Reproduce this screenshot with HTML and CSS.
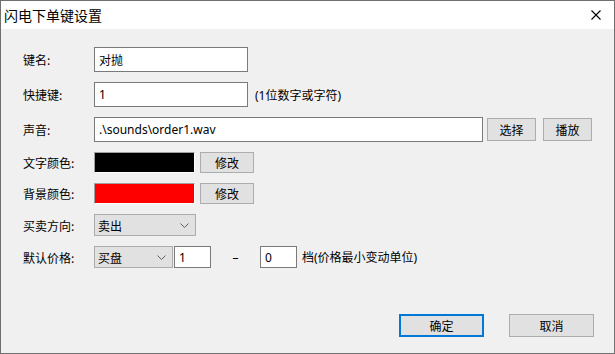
FILE: index.html
```html
<!DOCTYPE html>
<html lang="zh-CN">
<head>
  <meta charset="UTF-8">
  <title>闪电下单键设置</title>
  <link rel="stylesheet" href="styles.css">
</head>
<body>
  <div class="window">
    <div class="titlebar">
      <span class="title">闪电下单键设置</span>
      <svg class="close" width="10" height="10" viewBox="0 0 10 10">
        <path d="M0.5 0.5 L9.5 9.5 M9.5 0.5 L0.5 9.5" stroke="#000" stroke-width="1.1" fill="none"/>
      </svg>
    </div>
    <div class="content">
      <div class="row row-tall">
        <label class="label">键名:</label>
        <div class="field field-short">对抛</div>
      </div>
      <div class="row row-tall">
        <label class="label">快捷键:</label>
        <div class="field field-short">1</div>
        <span class="hint">(1位数字或字符)</span>
      </div>
      <div class="row row-tall">
        <label class="label">声音:</label>
        <div class="field field-long">.\sounds\order1.wav</div>
        <button class="btn btn-select">选择</button>
        <button class="btn btn-play">播放</button>
      </div>
      <div class="row row-color">
        <label class="label">文字颜色:</label>
        <div class="swatch swatch-black"></div>
        <button class="btn btn-edit">修改</button>
      </div>
      <div class="row row-color">
        <label class="label">背景颜色:</label>
        <div class="swatch swatch-red"></div>
        <button class="btn btn-edit">修改</button>
      </div>
      <div class="row">
        <label class="label">买卖方向:</label>
        <div class="combo combo-side">
          <span>卖出</span>
          <svg class="chevron" width="9" height="5" viewBox="0 0 9 5"><path d="M0.5 0.5 L4.5 4.5 L8.5 0.5" stroke="#606060" fill="none"/></svg>
        </div>
      </div>
      <div class="row">
        <label class="label">默认价格:</label>
        <div class="combo combo-price">
          <span>买盘</span>
          <svg class="chevron" width="9" height="5" viewBox="0 0 9 5"><path d="M0.5 0.5 L4.5 4.5 L8.5 0.5" stroke="#606060" fill="none"/></svg>
        </div>
        <div class="field field-num">1</div>
        <span class="dash">–</span>
        <div class="field field-num">0</div>
        <span class="unit">档(价格最小变动单位)</span>
      </div>
    </div>
    <div class="footer">
      <button class="btn btn-footer btn-default">确定</button>
      <button class="btn btn-footer">取消</button>
    </div>
  </div>
</body>
</html>
```

FILE: styles.css
```css
body {
  margin: 0;
  font-family: "Noto Sans", "Noto Sans CJK SC", sans-serif;
  font-size: 12px;
  color: #000;
}
.window {
  width: 613px;
  height: 352px;
  border: 1px solid #707070;
  background: #f0f0f0;
  display: flex;
  flex-direction: column;
}
.titlebar {
  height: 28px;
  background: #fff;
  display: flex;
  align-items: center;
  justify-content: space-between;
  padding: 0 13px 0 3px;
}
.title {
  font-size: 14px;
  font-family: "Noto Sans CJK SC", sans-serif;
}
.content {
  padding: 18px 0 0 22px;
  display: flex;
  flex-direction: column;
  gap: 10px;
}
.row {
  display: flex;
  align-items: center;
  height: 22px;
}
.row-tall {
  height: 25px;
}
.row-color {
  height: 21px;
}
.label {
  width: 71px;
  font-family: "Noto Sans CJK SC", sans-serif;
}
.field {
  box-sizing: border-box;
  height: 100%;
  background: #fff;
  border: 1px solid #7a7a7a;
  padding-left: 4px;
  display: flex;
  align-items: center;
  white-space: nowrap;
}
.field-short {
  width: 154px;
}
.field-long {
  width: 389px;
}
.field-num {
  width: 37px;
}
.hint {
  margin-left: 7px;
}
.btn {
  box-sizing: border-box;
  height: 23px;
  background: #e1e1e1;
  border: 1px solid #adadad;
  font-family: "Noto Sans CJK SC", sans-serif;
  font-size: 12px;
  padding: 0;
  color: #000;
}
.btn-select {
  width: 49px;
  margin-left: 4px;
}
.btn-play {
  width: 49px;
  margin-left: 7px;
}
.btn-edit {
  width: 54px;
  height: 21px;
  margin-left: 5px;
}
.swatch {
  box-sizing: border-box;
  width: 101px;
  height: 21px;
  border-top: 1px solid #a0a0a0;
  border-left: 1px solid #a0a0a0;
  border-bottom: 1px solid #fff;
  border-right: 1px solid #fff;
}
.swatch-black {
  background: #000;
}
.swatch-red {
  background: #ff0000;
}
.combo {
  box-sizing: border-box;
  height: 22px;
  background: #e1e1e1;
  border: 1px solid #adadad;
  display: flex;
  align-items: center;
  justify-content: space-between;
  padding: 0 6px 0 3px;
  font-family: "Noto Sans CJK SC", sans-serif;
}
.combo-side {
  width: 102px;
}
.combo-price {
  width: 79px;
  margin-right: 1px;
}
.dash {
  width: 49px;
  text-align: center;
}
.unit {
  margin-left: 5px;
}
.footer {
  margin-top: auto;
  margin-bottom: 16px;
  display: flex;
  justify-content: flex-end;
  gap: 25px;
  padding-right: 20px;
}
.btn-footer {
  width: 85px;
  height: 23px;
}
.btn-default {
  border: 2px solid #0078d7;
}
```
